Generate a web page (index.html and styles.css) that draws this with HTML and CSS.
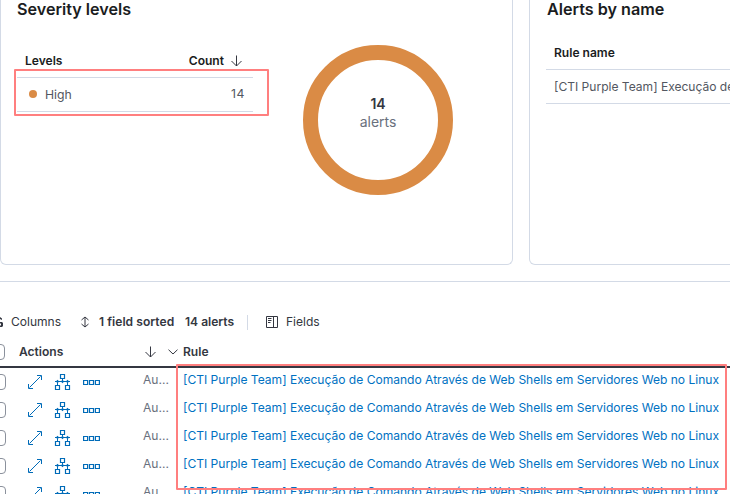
FILE: index.html
```
<!DOCTYPE html>
<html lang="pt">
<head>
<meta charset="utf-8">
<title>Alerts</title>
<link rel="stylesheet" href="styles.css">
</head>
<body>
<svg width="0" height="0" class="defs">
  <symbol id="expand" viewBox="0 0 16 16"><path d="M10 1.500h4.500V6M13.500 2.500l-11 11M1.500 10v4.500H6"/></symbol>
  <symbol id="tree" viewBox="0 0 17 16"><path class="bold" d="M6.500.5h4v4h-4zM1.500 11.500h4v4h-4zM11.500 11.500h4v4h-4z"/><path d="M8.500 4.500v2M1 7.500h15M3.500 9v2.500M13.500 9v2.500"/><path class="solid" d="m3.500 5.800 1.700 1.700-1.700 1.700-1.700-1.700zM8.500 5.800l1.700 1.700-1.700 1.700-1.700-1.700zM13.500 5.800l1.700 1.700-1.700 1.700-1.700-1.700z"/></symbol>
  <symbol id="more" viewBox="0 0 17 16"><path class="bold" d="M.6 6.500h4v4h-4zM6.500 6.500h4v4h-4zM12.400 6.500h4v4h-4z"/></symbol>
  <symbol id="down" viewBox="0 0 12 12"><path d="M6.500 .5v10.500M1.500 6l5 5 5-5"/></symbol>
</svg>
<main class="page">
  <div class="panels">
    <section class="panel severity">
      <h2>Severity levels</h2>
      <div class="split">
        <div class="levels">
          <div class="levels-head"><span class="t-levels">Levels</span><span class="count"><span class="t-count">Count</span><svg class="icon12"><use href="#down"/></svg></span></div>
          <div class="levels-row"><i class="dot"></i><span class="t-high">High</span><span class="num">14</span></div>
        </div>
        <div class="donut"><b>14</b><span>alerts</span></div>
      </div>
    </section>
    <section class="panel names">
      <h2>Alerts by name</h2>
      <div class="names-head">Rule name</div>
      <div class="names-row"><span>[CTI Purple Team] Execução de Comando Através de Web Shells</span></div>
    </section>
  </div>
  <section class="events">
    <div class="toolbar">
      <svg class="columns-icon" viewBox="0 0 4 12"><path class="wheel" d="M0 1 2 2.500V4L0 3zM0 6h2l1 1v3l-1 1H0V9.500h1v-2H0z"/></svg>
      <span class="t-columns">Columns</span>
      <svg class="sort-icon" viewBox="0 0 8 12"><path d="M4.500 1v10M1 4 4.500 1 8 4M1 8l3.500 3L8 8"/></svg>
      <b class="t-sorted">1 field sorted</b>
      <b class="t-total">14 alerts</b>
      <i class="sep"></i>
      <svg class="fields-icon" viewBox="0 0 12 12"><path d="M.5.5h11v11H.5zM7.500.5v11M2 2.500h3.500M2 4.500h3.500M2 6.500h2.500"/></svg>
      <span class="t-fields">Fields</span>
    </div>
    <div class="grid-head">
      <i class="check"></i><b class="t-actions">Actions</b><svg class="icon12"><use href="#down"/></svg><svg class="chev" viewBox="0 0 10 6"><path d="m.5.7 4.500 4.300L9.500.7"/></svg><b class="t-rule">Rule</b>
    </div>
    <div class="row"><i class="check"></i><svg class="act"><use href="#expand"/></svg><svg class="act"><use href="#tree"/></svg><svg class="act"><use href="#more"/></svg><span class="au">Au...</span><a>[CTI Purple Team] Execução de Comando Através de Web Shells em Servidores Web no Linux</a></div>
    <div class="row"><i class="check"></i><svg class="act"><use href="#expand"/></svg><svg class="act"><use href="#tree"/></svg><svg class="act"><use href="#more"/></svg><span class="au">Au...</span><a>[CTI Purple Team] Execução de Comando Através de Web Shells em Servidores Web no Linux</a></div>
    <div class="row"><i class="check"></i><svg class="act"><use href="#expand"/></svg><svg class="act"><use href="#tree"/></svg><svg class="act"><use href="#more"/></svg><span class="au">Au...</span><a>[CTI Purple Team] Execução de Comando Através de Web Shells em Servidores Web no Linux</a></div>
    <div class="row"><i class="check"></i><svg class="act"><use href="#expand"/></svg><svg class="act"><use href="#tree"/></svg><svg class="act"><use href="#more"/></svg><span class="au">Au...</span><a>[CTI Purple Team] Execução de Comando Através de Web Shells em Servidores Web no Linux</a></div>
    <div class="row"><i class="check"></i><svg class="act"><use href="#expand"/></svg><svg class="act"><use href="#tree"/></svg><svg class="act"><use href="#more"/></svg><span class="au">Au...</span><a>[CTI Purple Team] Execução de Comando Através de Web Shells em Servidores Web no Linux</a></div>
  </section>
  <div class="mark mark-level"></div>
  <div class="mark mark-rules"></div>
</main>
</body>
</html>
```
FILE: styles.css
```
* { box-sizing: border-box; }
body { margin: 0; background: #fff; font-family: Inter, sans-serif; font-size: 12.050px; line-height: 20px; color: #343741; }
.defs { display: block; position: absolute; }
.page { position: relative; width: 730px; height: 494px; overflow: hidden; }
svg { display: block; flex: none; fill: none; stroke: #343741; stroke-width: 1; }
.solid { fill: #006bb8; stroke: none; }
.bold { stroke-width: 1.200; }
.wheel { fill: #343741; stroke: none; }
span, b, a { white-space: nowrap; }
b { font-weight: 600; }

.panels { display: flex; gap: 16px; width: 1042px; height: 282px; padding-bottom: 17px; border-bottom: 1px solid #d3dae6; }
.panel { width: 513px; height: 265px; border: 1px solid #d3dae6; border-top: 0; border-radius: 0 0 6px 6px; padding-left: 16px; }
h2 { margin: 0; height: 20px; font-size: 16.150px; line-height: 19px; font-weight: 600; color: #1a1c21; }
.split { display: flex; }
.levels { width: 236px; padding-top: 31px; }
.levels-head { display: flex; justify-content: space-between; height: 27px; padding: 0 11px 0 8px; border-bottom: 1px solid #d3dae6; font-weight: 600; color: #1a1c21; }
.count { display: flex; gap: 6px; }
.icon12 { width: 12px; height: 12px; }
.count .icon12 { margin-top: 4px; }
.levels-row { display: flex; align-items: center; height: 34px; padding: 0 8px 0 12px; border-bottom: 1px solid #d3dae6; font-size: 12.250px; color: #535761; }
.dot { width: 8px; height: 8px; margin: -1px 8px 0 0; border-radius: 50%; background: #da8b45; }
.num { margin: -2px 0 0 auto; letter-spacing: .5px; }
.donut { display: flex; flex-direction: column; align-items: center; width: 150px; height: 150px; margin: 25px 0 0 50px; padding-top: 35px; border: 15px solid #da8b45; border-radius: 50%; font-size: 14px; line-height: 18px; color: #69707d; }
.donut b { color: #343741; }
.names { padding-left: 17px; }
.names-head { height: 50px; margin-left: -1px; padding: 23px 8px 0; border-bottom: 1px solid #d3dae6; font-weight: 600; color: #1a1c21; }
.names-row { height: 34px; margin-left: -1px; padding: 7px 8px 0; border-bottom: 1px solid #d3dae6; overflow: hidden; color: #535761; }

.toolbar { display: flex; align-items: center; height: 20px; margin-top: 30px; color: #343741; }
.columns-icon { width: 4px; height: 12px; margin-right: 7px; }
.t-columns { width: 69px; }
.sort-icon { width: 9px; height: 12px; margin-right: 10px; }
.t-sorted { width: 86px; letter-spacing: .05px; }
.t-total { width: 62px; }
.sep { width: 1px; height: 15px; margin-right: 18px; background: #d3dae6; }
.fields-icon { width: 12px; height: 12px; margin-right: 8px; }
.grid-head { display: flex; align-items: center; height: 36px; padding-top: 6px; border-bottom: 2px solid #343741; }
.check { flex: none; width: 16px; height: 16px; margin-left: -10px; border: 1px solid #8b919c; border-radius: 4px; }
.grid-head .check { margin-left: -11px; }
.t-actions { width: 125px; margin-left: 14px; }
.chev { width: 10px; height: 6px; margin: 0 5px 0 12px; }
.row { display: flex; align-items: center; height: 28px; }
.act { width: 17px; height: 16px; margin-left: 11px; stroke: #006bb8; }
.check + .act { width: 16px; margin-left: 21px; }
.act:nth-of-type(3) { margin-left: 12px; }
.au { width: 40px; margin: -4px 0 0 43px; color: #69707d; }
.row a { margin-top: -4px; color: #0071c2; }

.mark { position: absolute; border: 2px solid #ff7f7f; border-radius: 1px; }
.mark-level { left: 14px; top: 69px; width: 255px; height: 47px; }
.mark-rules { left: 176px; top: 364px; width: 551px; height: 126px; }
```
